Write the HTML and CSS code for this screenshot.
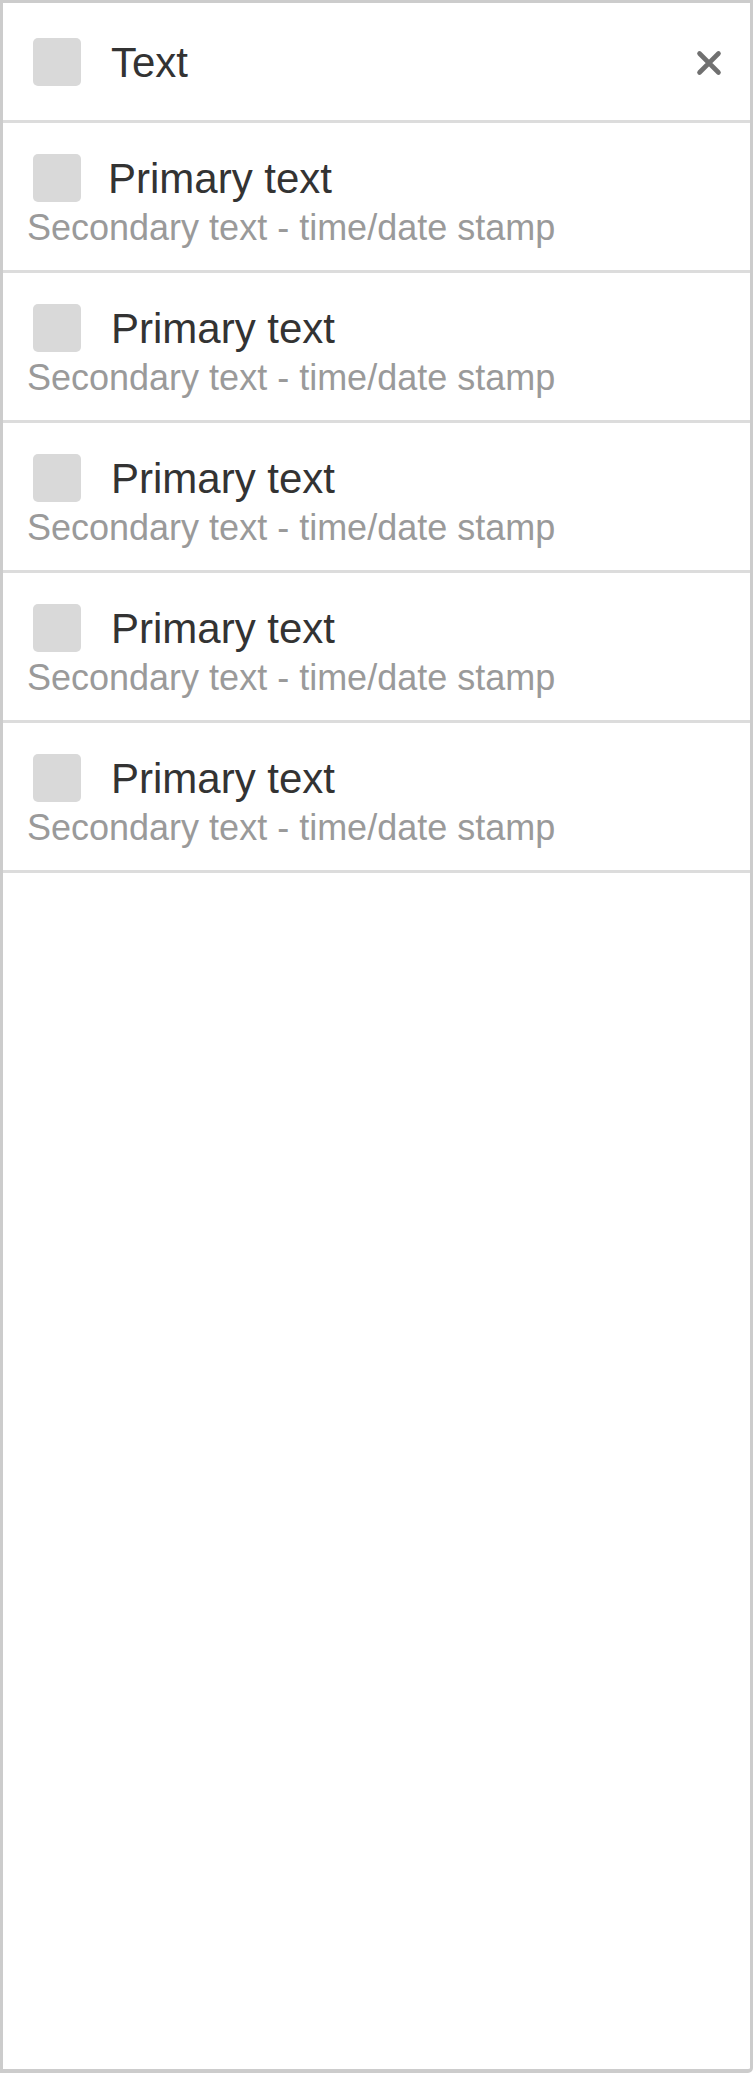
FILE: index.html
```html
<!DOCTYPE html>
<html lang="en">
<head>
  <meta charset="UTF-8" />
  <meta name="viewport" content="width=device-width, initial-scale=1.0" />
  <title>List panel</title>
  <link rel="stylesheet" href="styles.css">
</head>
<body>

  <div class="panel">
    <div class="panel-header">
      <div class="checkbox"></div>
      <span class="header-title">Text</span>
      <button class="close-btn" aria-label="Close">
        <svg width="26" height="26" viewBox="0 0 26 26">
          <path d="M3.5 3.5 L22.5 22.5 M22.5 3.5 L3.5 22.5" stroke="#707070" stroke-width="4.6" stroke-linecap="round" fill="none" />
        </svg>
      </button>
    </div>

    <ul class="list">
      <li class="list-item first">
        <div class="item-main">
          <div class="checkbox"></div>
          <span class="primary">Primary text</span>
        </div>
        <div class="secondary">Secondary text - time/date stamp</div>
      </li>
      <li class="list-item">
        <div class="item-main">
          <div class="checkbox"></div>
          <span class="primary">Primary text</span>
        </div>
        <div class="secondary">Secondary text - time/date stamp</div>
      </li>
      <li class="list-item">
        <div class="item-main">
          <div class="checkbox"></div>
          <span class="primary">Primary text</span>
        </div>
        <div class="secondary">Secondary text - time/date stamp</div>
      </li>
      <li class="list-item">
        <div class="item-main">
          <div class="checkbox"></div>
          <span class="primary">Primary text</span>
        </div>
        <div class="secondary">Secondary text - time/date stamp</div>
      </li>
      <li class="list-item">
        <div class="item-main">
          <div class="checkbox"></div>
          <span class="primary">Primary text</span>
        </div>
        <div class="secondary">Secondary text - time/date stamp</div>
      </li>
    </ul>
  </div>

</body>
</html>
```

FILE: styles.css
```css
* {
  margin: 0;
  padding: 0;
  box-sizing: border-box;
  font-family: "Liberation Sans", Arial, sans-serif;
}

body {
  background: #ffffff;
  width: 753px;
  height: 2073px;
}

.panel {
  width: 100%;
  height: 100%;
  border: 3px solid #cccccc;
  border-bottom-width: 4px;
  border-radius: 0 0 5px 0;
  background: #ffffff;
  display: flex;
  flex-direction: column;
}

.checkbox {
  width: 48px;
  height: 48px;
  border-radius: 5px;
  background: #d9d9d9;
  flex-shrink: 0;
}

/* header */
.panel-header {
  height: 120px;
  border-bottom: 3px solid #dcdcdc;
  display: flex;
  align-items: center;
  padding: 0 24px 0 30px;
}

.header-title {
  margin-left: 30px;
  font-size: 42px;
  line-height: 48px;
  color: #333333;
  flex: 1;
  padding-top: 2px;
}

.close-btn {
  width: 34px;
  height: 34px;
  border: none;
  background: none;
  display: flex;
  align-items: center;
  justify-content: center;
  cursor: pointer;
  margin-top: 2px;
}

/* list */
.list {
  list-style: none;
}

.list-item {
  height: 150px;
  border-bottom: 3px solid #dcdcdc;
  padding: 30px 24px 0 24px;
}

.item-main {
  display: flex;
  align-items: center;
  padding-left: 6px;
}

.primary {
  margin-left: 30px;
  font-size: 42px;
  line-height: 48px;
  color: #333333;
  padding-top: 2px;
}

.list-item.first .primary {
  margin-left: 27px;
}

.secondary {
  margin-top: 5px;
  font-size: 36px;
  line-height: 40px;
  color: #9a9a9a;
}
```
